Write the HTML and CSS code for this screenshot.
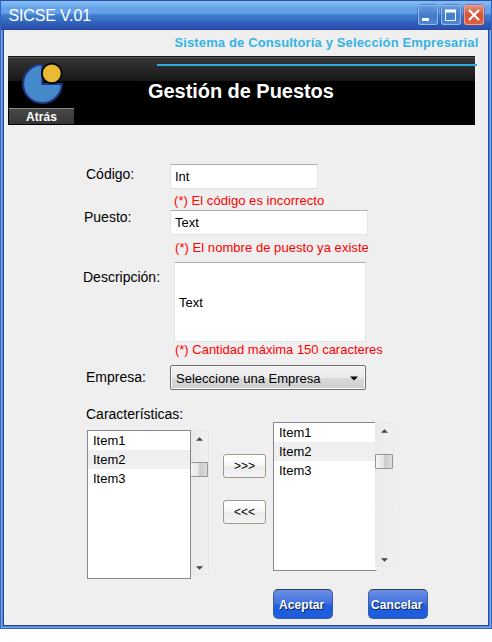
FILE: index.html
```html
<!DOCTYPE html>
<html lang="es">
<head>
<meta charset="utf-8">
<title>SICSE V.01</title>
<link rel="stylesheet" href="styles.css">
</head>
<body>
<div class="window">
  <header class="titlebar">
    <span class="app-name">SICSE V.01</span>
    <div class="controls">
      <svg class="control" viewBox="0 0 20 20"><rect x="4" y="13" width="7" height="3" fill="#fff"/></svg>
      <svg class="control" viewBox="0 0 20 20"><path d="M4.5 5v10.500h10V5" fill="none" stroke="#fff"/><path d="M4 6h11" stroke="#fff" stroke-width="3"/></svg>
      <svg class="control close" viewBox="0 0 20 20"><path d="M5 5l10 10M15 5L5 15" stroke="#fff" stroke-width="2.2"/></svg>
    </div>
  </header>
  <main class="content">
    <div class="subtitle">Sistema de Consultoría y Selección Empresarial</div>
    <div class="banner">
      <div class="back">
        <svg class="back-icon" width="44" height="44" viewBox="0 0 44 44"><path d="M21.3 2.500A19.300 19.300 0 1 0 40.700 22H21.300Z" fill="#448acb" stroke="#203488" stroke-width="2"/><circle cx="30.800" cy="11.400" r="9.800" fill="#ebba35" stroke="#090909" stroke-width="1.8"/></svg>
        <div class="back-label">Atrás</div>
      </div>
      <h1 class="heading">Gestión de Puestos</h1>
      <div class="rule"></div>
    </div>
    <form class="form">
      <div class="row code-row"><label class="label code-label">Código:</label><div class="input code-input">Int</div></div>
      <div class="error code-error">(*) El código es incorrecto</div>
      <div class="row job-row"><label class="label job-label">Puesto:</label><div class="input job-input">Text</div></div>
      <div class="error job-error">(*) El nombre de puesto ya existe</div>
      <div class="row desc-row"><label class="label desc-label">Descripción:</label><div class="input desc-input">Text</div></div>
      <div class="error desc-error">(*) Cantidad máxima 150 caracteres</div>
      <div class="row company-row"><label class="label company-label">Empresa:</label>
        <div class="select"><span>Seleccione una Empresa</span><svg width="8" height="5" viewBox="0 0 8 5"><path d="M0 0.5h8L4 4.500z"/></svg></div>
      </div>
      <div class="label features-label">Características:</div>
      <div class="transfer">
        <div class="listbox source">
          <ul class="items"><li>Item1</li><li class="alt">Item2</li><li>Item3</li></ul>
          <div class="scroll"><svg class="up" width="7" height="4" viewBox="0 0 8 4"><path d="M0 4L4 0l4 4z"/></svg><div class="thumb"></div><svg class="down" width="7" height="4" viewBox="0 0 8 4"><path d="M0 0h8L4 4z"/></svg></div>
        </div>
        <div class="moves"><div class="move">&gt;&gt;&gt;</div><div class="move">&lt;&lt;&lt;</div></div>
        <div class="listbox target">
          <ul class="items"><li>Item1</li><li class="alt">Item2</li><li>Item3</li></ul>
          <div class="scroll"><svg class="up" width="7" height="4" viewBox="0 0 8 4"><path d="M0 4L4 0l4 4z"/></svg><div class="thumb"></div><svg class="down" width="7" height="4" viewBox="0 0 8 4"><path d="M0 0h8L4 4z"/></svg></div>
        </div>
      </div>
      <div class="actions"><div class="action">Aceptar</div><div class="action cancel">Cancelar</div></div>
    </form>
  </main>
</div>
</body>
</html>
```

FILE: styles.css
```css
* { box-sizing: border-box; }
body { margin: 0; background: #fff; font: 13px/16px "Liberation Sans", Arial, sans-serif; color: #000; overflow: hidden; }
.window { width: 492px; height: 629px; display: flex; flex-direction: column; background: #efefef; border: 1px solid #3462bd; border-top: 0; box-shadow: inset 0 0 0 1px #78a9e8, inset 0 0 0 2px #5388d5, inset 0 0 0 3px #24489c; }
.titlebar { height: 30px; flex: none; display: flex; justify-content: space-between; padding: 0 7px 0 7.5px; border-top: 1px solid #2c4eaf; border-bottom: 1px solid #2a469e; background: linear-gradient(#87bcec 0, #73b3ed 4px, #639fe8 8px, #6ba3ea 12px, #4a8cdb 13px, #3b78cb 15px, #3670c5 19px, #2f5bb6 23px, #2a51ad 28px); }
.app-name { color: #fff; font-size: 16px; line-height: 18px; margin-top: 6px; letter-spacing: -0.15px; }
.controls { display: flex; gap: 3px; margin-top: 4px; }
.control { display: block; width: 20px; height: 20px; border-radius: 3px; background: linear-gradient(#6a9ce0, #427bcb 55%, #4d8ad5); box-shadow: inset 0 0 0 1px #92b7e9, 0 0 0 0.5px #2f57aa; }
.control.close { background: linear-gradient(#e29785, #d9512e 50%, #dc6543); box-shadow: inset 0 0 0 1px #dfa6a1, 0 0 0 0.5px #863f62; }
.content { padding: 0 3px; }
.subtitle { height: 26px; padding: 5px 9.5px 0 0; text-align: right; color: #34b4e5; font-weight: bold; white-space: nowrap; letter-spacing: 0.14px; }
.banner { position: relative; margin-left: 4px; width: 467px; height: 69px; display: flex; background: linear-gradient(#161616 0 1px, #575757 1px 2px, #353535 2px, #171717 25px, #000 25px); }
.back { width: 67px; padding: 6px 0 0 1px; }
.back-icon { display: block; margin: 0 0 2px 12px; }
.back-label { width: 65px; height: 16px; border-top: 1px solid #858585; background: linear-gradient(#484848, #353535); color: #fff; font: bold 12px/16px "Liberation Sans", Arial, sans-serif; text-align: center; letter-spacing: 0.1px; }
.heading { margin: 23px 0 0 73px; color: #fff; font-size: 20px; line-height: 24px; white-space: nowrap; letter-spacing: -0.05px; }
.rule { position: absolute; left: 149px; top: 8px; width: 320px; height: 2px; background: #2cacdc; }
.form { padding-top: 39px; }
.row { display: flex; align-items: flex-start; height: 25px; }
.label { display: block; flex: none; font-size: 14px; line-height: 16px; white-space: nowrap; }
.code-label { width: 84px; margin: 2px 0 0 82px; }
.job-label { width: 86px; margin: -1px 0 0 80px; }
.desc-label { width: 91px; margin: 7px 0 0 79px; }
.company-label { width: 84px; margin: 4px 0 0 82px; }
.features-label { margin: 16px 0 0 82px; }
.input { height: 25px; display: flex; align-items: center; padding-left: 4px; background: #fff; border: 1px solid #e1e4ea; border-top-color: #abadb3; border-radius: 1px; }
.code-input { width: 148px; }
.job-input { width: 198px; }
.desc-input { width: 192px; height: 80px; padding-top: 2px; }
.error { color: #f00; white-space: nowrap; margin-left: 170px; letter-spacing: 0.05px; }
.code-error { margin-top: 4px; }
.job-row { margin-top: 1px; }
.job-error { margin-top: 5px; margin-left: 171px; }
.desc-row { height: 80px; margin-top: 6px; }
.desc-error { margin-left: 171px; letter-spacing: -0.01px; }
.company-row { margin-top: 7px; }
.select { width: 196px; height: 25px; display: flex; align-items: center; justify-content: space-between; padding: 2px 7px 0 5px; border: 1px solid #707070; border-radius: 2px; background: linear-gradient(#f2f2f2, #ebebeb 50%, #dadada 50%, #cfcfcf); box-shadow: inset 0 0 0 1px #f7f7f7; }
.transfer { display: flex; height: 157px; margin-left: 83px; }
.listbox { display: flex; align-items: flex-start; }
.source { margin-top: 8px; }
.items { list-style: none; margin: 0; padding: 0; width: 104px; height: 149px; background: #fff; border: 1px solid #828790; }
.items li { height: 19px; padding-left: 5px; line-height: 19px; }
.items .alt { background: #efefef; }
.target .items { border-right-color: #f3f3f3; }
.scroll { width: 18px; height: 145px; display: flex; flex-direction: column; align-items: center; border: 1px solid #e9e9e9; border-left: 0; background: linear-gradient(90deg, #eaeaea, #f0f0f0); }
.target .scroll { margin-left: -2px; width: 19px; }
.up { margin-top: 6px; fill: #444; }
.thumb { width: 100%; height: 15px; margin-top: 21px; border: 1px solid #979797; border-radius: 1px; background: linear-gradient(90deg, #f4f4f4, #e6e6e6 45%, #c8cacc 55%, #dcdcdc); }
.source .thumb { border-left: 0; }
.down { margin-top: 89px; fill: #444; }
.moves { width: 43px; margin: 32px 7px 0 14px; display: grid; grid-auto-rows: 24px; row-gap: 22px; }
.move { border: 1px solid #a59786; border-radius: 3px; background: linear-gradient(#fff, #f8f8f8 45%, #ebebeb 55%, #f5f5f5); text-align: center; font-size: 12px; line-height: 23px; }
.actions { display: flex; gap: 35px; margin: 10px 0 0 269px; }
.action { width: 60px; height: 30px; padding-left: 5px; border: 1px solid #3d5c9e; border-top-color: #313d55; border-radius: 5px; background: linear-gradient(#6b8fe3, #3e6fdd 50%, #1e5ddb 54%, #1e5ddb); color: #fff; font: bold 12px/30px "Liberation Sans", Arial, sans-serif; letter-spacing: 0.1px; text-shadow: 1px 1px 0 #15264e; }
.action.cancel { padding-left: 2px; }
```
